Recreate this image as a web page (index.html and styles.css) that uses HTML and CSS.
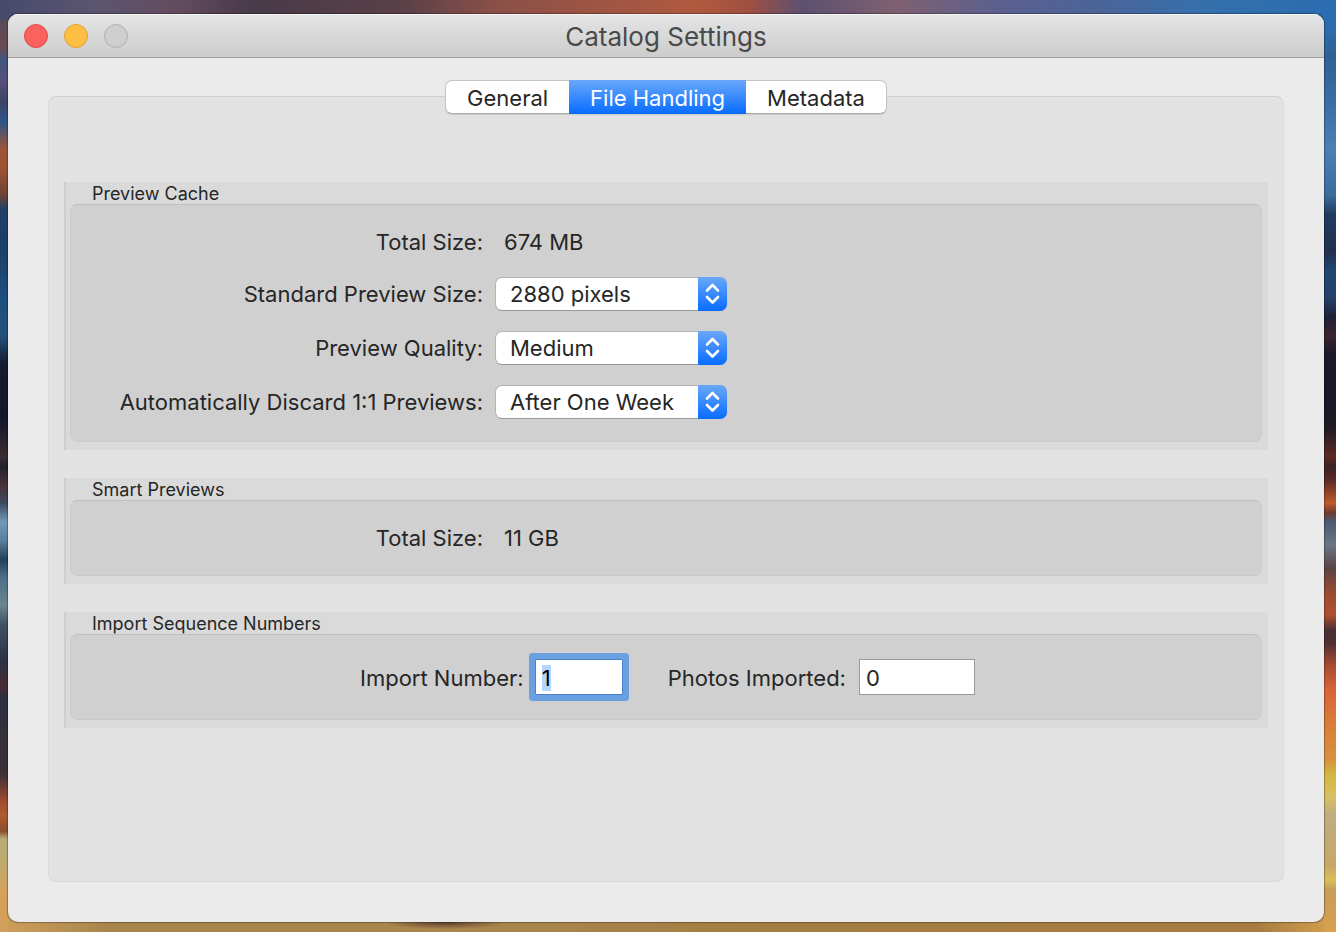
FILE: index.html
```html
<!DOCTYPE html>
<html lang="en">
<head>
<meta charset="utf-8">
<title>Catalog Settings</title>
<link rel="stylesheet" href="styles.css">
</head>
<body>
<main class="window">
  <header class="titlebar">
    <div class="lights">
      <button class="light close" type="button" aria-label="Close"></button>
      <button class="light minimize" type="button" aria-label="Minimize"></button>
      <button class="light zoom" type="button" aria-label="Zoom" disabled></button>
    </div>
    <h1 class="title">Catalog Settings</h1>
  </header>
  <div class="content">
    <nav class="tabs" role="tablist">
      <button class="tab" type="button" role="tab" aria-selected="false">General</button>
      <button class="tab active" type="button" role="tab" aria-selected="true">File Handling</button>
      <button class="tab" type="button" role="tab" aria-selected="false">Metadata</button>
    </nav>
    <div class="panel">
      <section class="group">
        <h2 class="group-title">Preview Cache</h2>
        <div class="box form">
          <span class="label">Total Size:</span>
          <span class="value">674 MB</span>
          <label class="label" for="size">Standard Preview Size:</label>
          <div class="popup">
            <select id="size"><option>2880 pixels</option></select>
            <svg class="arrows" viewBox="0 0 29 34" aria-hidden="true"><path d="M9 13.5 14.5 8 20 13.5M9 20 14.5 25.5 20 20"/></svg>
          </div>
          <label class="label" for="quality">Preview Quality:</label>
          <div class="popup">
            <select id="quality"><option>Medium</option></select>
            <svg class="arrows" viewBox="0 0 29 34" aria-hidden="true"><path d="M9 13.5 14.5 8 20 13.5M9 20 14.5 25.5 20 20"/></svg>
          </div>
          <label class="label" for="discard">Automatically Discard 1:1 Previews:</label>
          <div class="popup">
            <select id="discard"><option>After One Week</option></select>
            <svg class="arrows" viewBox="0 0 29 34" aria-hidden="true"><path d="M9 13.5 14.5 8 20 13.5M9 20 14.5 25.5 20 20"/></svg>
          </div>
        </div>
      </section>
      <section class="group">
        <h2 class="group-title">Smart Previews</h2>
        <div class="box form">
          <span class="label">Total Size:</span>
          <span class="value">11 GB</span>
        </div>
      </section>
      <section class="group">
        <h2 class="group-title">Import Sequence Numbers</h2>
        <div class="box numbers">
          <label class="label" for="import">Import Number:</label>
          <input class="field focused" id="import" type="text" value="1">
          <label class="label photos" for="photos">Photos Imported:</label>
          <input class="field wide" id="photos" type="text" value="0">
        </div>
      </section>
    </div>
  </div>
</main>
<script src="script.js"></script>
</body>
</html>
```
FILE: script.js
```js
const field = document.getElementById("import");
field.focus();
field.select();
```
FILE: styles.css
```css
* { box-sizing: border-box; }

body {
  margin: 0;
  min-height: 100vh;
  display: flex;
  padding: 14px 12px 10px 8px;
  font-family: Inter, "Liberation Sans", sans-serif;
  font-size: 22px;
  line-height: 30px;
  color: #262626;
  background:
    linear-gradient(90deg, #484a6c, #5a5570 7%, #644c60 13%, #483a48 19%, #5a4048 30%, #8a5048 37%, #b0593f 52%, #a05040 56%, #5c5070 60%, #806070 67%, #5a6090 75%, #4c6498 82%, #3570ac 90%, #2a6cb0) 0 0 / 100% 20px no-repeat,
    linear-gradient(#4b4a66, #6a4a50 5%, #3f5580 6.5%, #56507a 8.5%, #3c4468 11%, #2c5588 13%, #9c5538 16%, #a0522f 18%, #6b4338 21%, #1f3f66 22.5%, #1c4068 27%, #1c4f80 32%, #23527a 36%, #151c30 39%, #14172a 45%, #3c2c33 49%, #20202c 50%, #4a3038 52%, #3c4a60 54%, #6f9ab8 56%, #58809c 58%, #24405a 60%, #4c7088 62%, #6a8490 65%, #3f5264 67%, #2a3244 71%, #4a2c34 73.5%, #2d3040 75%, #3c3038 83%, #a04c2c 86%, #b05a2e 87.5%, #8a5032 89.2%, #b8ac78 90%, #c0aa6c 93%, #d8a058 96%, #cfa05c) 0 0 / 8px 100% no-repeat,
    linear-gradient(#2a66a0, #2c6cae 3%, #2f6294 6%, #3a6fa6 11%, #4a80b4 16%, #3a6c9c 21%, #1f3c60 23%, #22304e 27%, #1f4770 29%, #24406a 32%, #1e2236 34%, #3d2430 36%, #1b1a2a 38%, #181828 43%, #221a24 46%, #5c2a22 49%, #3c2224 50%, #5a2a26 51.5%, #c05a2c 54%, #703a2c 55%, #4c5a74 56%, #6b7684 58.5%, #5c4444 61%, #a04c30 64%, #b05030 66%, #4a2e34 67.6%, #502e30 69%, #a84c30 71.4%, #d86438 74%, #d88038 78%, #d89040 81.5%, #d4b440 83%, #d8c060 85.3%, #c0ac80 87.5%, #c8a868 93%, #d8c058 94.4%, #c89c58 95.5%, #d8a050) 100% 0 / 12px 100% no-repeat,
    radial-gradient(60px 6px at 445px calc(100% - 9px), #5f4030, transparent),
    linear-gradient(90deg, #cfa05c, #a8854c 8%, #a8854c 40%, #a37c40 60%, #a67c42 94%, #d8a050);
}

button, input, select { font: inherit; color: inherit; }

.window {
  flex: 1;
  display: flex;
  flex-direction: column;
  border-radius: 10px;
  background: #ebebeb;
  box-shadow: 0 0 1px 1px rgba(0, 0, 0, 0.3);
  overflow: hidden;
}

.titlebar {
  display: grid;
  grid-template-columns: 1fr auto 1fr;
  align-items: center;
  height: 44px;
  padding: 0 16px;
  border-bottom: 1px solid #a0a0a0;
  background: linear-gradient(#e5e5e5, #cccccc);
  box-shadow: inset 0 1px #f5f5f5;
}

.lights { display: flex; gap: 16px; }

.light {
  width: 24px;
  height: 24px;
  padding: 0;
  border: 1px solid #b0b0b0;
  border-radius: 50%;
  background: #cecece;
}
.close { border-color: #e04946; background: #fc625d; }
.minimize { border-color: #dfa033; background: #fdbe41; }

.title {
  margin: 0;
  padding-top: 2px;
  font-size: 26px;
  line-height: 32px;
  font-weight: 400;
  color: #4a4a4a;
}

.content {
  flex: 1;
  display: flex;
  flex-direction: column;
  padding: 22px 40px 40px;
}

.tabs {
  z-index: 1;
  display: flex;
  align-self: center;
  height: 34px;
  margin-bottom: -18px;
  border: 1px solid #c4c4c4;
  border-bottom-color: #a9a9a9;
  border-radius: 7px;
  background: #fff;
  box-shadow: 0 1px 1px rgba(0, 0, 0, 0.1);
}

.tab {
  margin: -1px 0;
  padding: 2px 21px 0;
  border: 0;
  background: none;
}
.tab.active { background: linear-gradient(#6aa8f9, #076cff); color: #fff; }

.panel {
  flex: 1;
  padding: 85px 15px 40px;
  border: 1px solid #dadada;
  border-top-color: #cfcfcf;
  border-radius: 8px;
  background: #e2e2e2;
  display: flex;
  flex-direction: column;
  gap: 28px;
}

.group {
  padding: 0 6px 8px 4px;
  border-left: 2px solid #cecece;
  background: #dadada;
}

.group-title {
  margin: 0;
  padding: 2px 0 0 22px;
  font-size: 18px;
  line-height: 20px;
  font-weight: 400;
}

.box {
  border: 1px solid #c9c9c9;
  border-top-color: #bfbfbf;
  border-radius: 8px;
  background: #d0d0d0;
}

.form {
  display: grid;
  grid-template-columns: 412px 232px;
  column-gap: 12px;
  row-gap: 20px;
  align-items: center;
  padding: 22px 0;
}

.form .label { text-align: right; white-space: nowrap; }
.value { padding-left: 9px; }

.popup { position: relative; height: 34px; }

.popup select {
  appearance: none;
  width: 100%;
  height: 34px;
  padding: 0 30px 0 14px;
  border: 1px solid #b4b4b4;
  border-bottom-color: #989898;
  border-radius: 7px;
  background: #fff;
}

.arrows {
  position: absolute;
  top: 0;
  right: 0;
  width: 29px;
  height: 34px;
  border-radius: 0 7px 7px 0;
  background: linear-gradient(#6aa8f9, #076cff);
  fill: none;
  stroke: #fff;
  stroke-width: 2.6;
  stroke-linecap: round;
  stroke-linejoin: round;
  pointer-events: none;
}

.numbers {
  display: flex;
  align-items: center;
  padding: 24px 0 24px 289px;
}
.numbers .label { padding-top: 2px; }

.field {
  width: 88px;
  height: 36px;
  margin-left: 11px;
  padding: 2px 6px 0;
  border: 1px solid #9a9a9a;
  border-radius: 0;
  background: #fff;
  outline: none;
}
.field.wide { width: 116px; margin-left: 13px; }
.field.focused {
  border-color: #4a80c8;
  box-shadow: 0 0 0 6px #6a9fe0;
  border-radius: 1px;
}
.field::selection { background: #b3d7ff; color: #000; }
.photos { margin-left: 45px; }
```
